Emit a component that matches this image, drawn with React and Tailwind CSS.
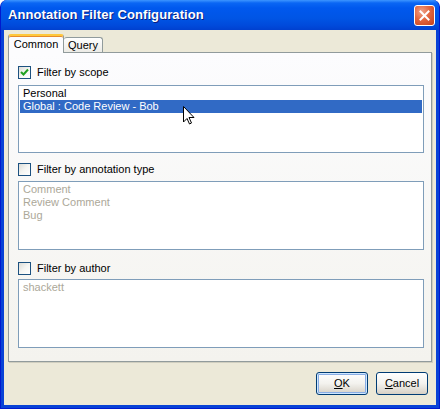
import React from "react";

const font = "font-['Liberation_Sans',Arial,sans-serif]";

const Checkbox = ({ checked, label }) => (
  <div className="flex items-center h-[13px]">
    <span className="w-[13px] h-[13px] border border-[#1C5180] bg-gradient-to-br from-[#DCDCD7] via-[#F5F5F2] to-white flex items-center justify-center shrink-0">
      {checked && (
        <svg width="9" height="9" viewBox="0 0 9 9">
          <path d="M1 4 L3.5 6.5 L8 1.5" stroke="#21A121" strokeWidth="2" fill="none" />
        </svg>
      )}
    </span>
    <span className="ml-[6px] text-[11px] text-black leading-none">{label}</span>
  </div>
);

const ListBox = ({ items, height, disabled, selected, children }) => (
  <div
    className={`relative border border-[#7F9DB9] bg-white p-px ${height}`}
  >
    {items.map((it, i) => (
      <div
        key={it}
        className={`h-[13px] leading-[13px] pl-[3px] text-[11px] ${
          selected === i
            ? "bg-[#316AC5] text-white"
            : disabled
            ? "text-[#ACA899]"
            : "text-black"
        }`}
      >
        {it}
      </div>
    ))}
    {children}
  </div>
);

const XpButton = ({ children, primary }) => (
  <button
    className={`w-[52px] h-[23px] rounded-[3px] border border-[#003C74] bg-gradient-to-b from-white via-[#F3F2EE] to-[#D6D0C5] text-[11px] text-black flex items-center justify-center ${
      primary ? "shadow-[inset_0_0_0_1px_#CEE7FF,inset_0_0_0_2px_#89ADE4]" : ""
    }`}
  >
    {children}
  </button>
);

export default function App() {
  return (
    <div className={`w-[440px] h-[409px] bg-white ${font}`}>
      <div className="w-full h-full flex flex-col rounded-t-[7px] overflow-hidden bg-[#0842D6] border-x border-b border-[#0019CF]">
        {/* Title bar */}
        <div className="h-[30px] shrink-0 flex items-center justify-between pl-[7px] pr-[4px] bg-[linear-gradient(to_bottom,#3D95FF_0px,#0A66F4_3px,#0058EE_8px,#0055E5_18px,#0049DA_26px,#0040CF_30px)]">
          <span className="text-white font-bold text-[13px] tracking-[0.1px] [text-shadow:1px_1px_0_#0A1E7F]">
            Annotation Filter Configuration
          </span>
          <span className="w-[21px] h-[21px] rounded-[3px] border border-white bg-[radial-gradient(circle_at_35%_30%,#F0A38A_0%,#E2663F_45%,#C4401A_100%)] flex items-center justify-center">
            <svg width="11" height="11" viewBox="0 0 11 11">
              <path d="M1.5 1.5 L9.5 9.5 M9.5 1.5 L1.5 9.5" stroke="white" strokeWidth="2" strokeLinecap="square" />
            </svg>
          </span>
        </div>

        {/* Client area */}
        <div className="flex-1 mx-[3px] mb-[3px] bg-[#ECE9D8] flex flex-col px-[4px] pt-[4px]">
          {/* Tabs */}
          <div className="flex items-end h-[18px] pl-0">
            <div className="relative z-10 -mb-px h-[19px] w-[56px] rounded-t-[3px] border-t-2 border-t-[#FFC83C] border-x border-x-[#919B9C] bg-[#FCFCFE] flex items-center justify-center text-[11px] shadow-[inset_0_1px_0_#E68B2C]">
              Common
            </div>
            <div className="h-[15px] w-[39px] rounded-t-[3px] border-t border-r border-[#919B9C] bg-gradient-to-b from-white to-[#ECEBE6] flex items-center justify-center text-[11px]">
              Query
            </div>
          </div>

          {/* Panel */}
          <div className="h-[310px] border border-[#919B9C] border-r-[#919B9C] bg-gradient-to-b from-[#FCFCFE] to-[#F4F3EE] pl-[9px] pr-[7px] pt-[13px] shadow-[1px_1px_0_#D0CEBF]">
            <Checkbox checked label="Filter by scope" />
            <div className="mt-[6px]">
              <ListBox
                items={["Personal", "Global : Code Review - Bob"]}
                selected={1}
                height="h-[68px]"
              >
                <svg
                  className="absolute left-[164px] top-[20px]"
                  width="12"
                  height="19"
                  viewBox="0 0 12 19"
                >
                  <path
                    d="M0.5 0.5 L0.5 16 L4 12.5 L6.5 18 L8.5 17 L6 11.5 L11 11.5 Z"
                    fill="white"
                    stroke="black"
                    strokeWidth="1"
                  />
                </svg>
              </ListBox>
            </div>
            <div className="mt-[10px]">
              <Checkbox label="Filter by annotation type" />
            </div>
            <div className="mt-[5px]">
              <ListBox
                items={["Comment", "Review Comment", "Bug"]}
                disabled
                height="h-[69px]"
              />
            </div>
            <div className="mt-[12px]">
              <Checkbox label="Filter by author" />
            </div>
            <div className="mt-[4px]">
              <ListBox items={["shackett"]} disabled height="h-[69px]" />
            </div>
          </div>

          {/* Buttons */}
          <div className="flex justify-end gap-[8px] pr-[4px] mt-[10px]">
            <XpButton primary>
              <span className="underline">O</span>K
            </XpButton>
            <XpButton>
              <span className="underline">C</span>ancel
            </XpButton>
          </div>
        </div>
      </div>
    </div>
  );
}
